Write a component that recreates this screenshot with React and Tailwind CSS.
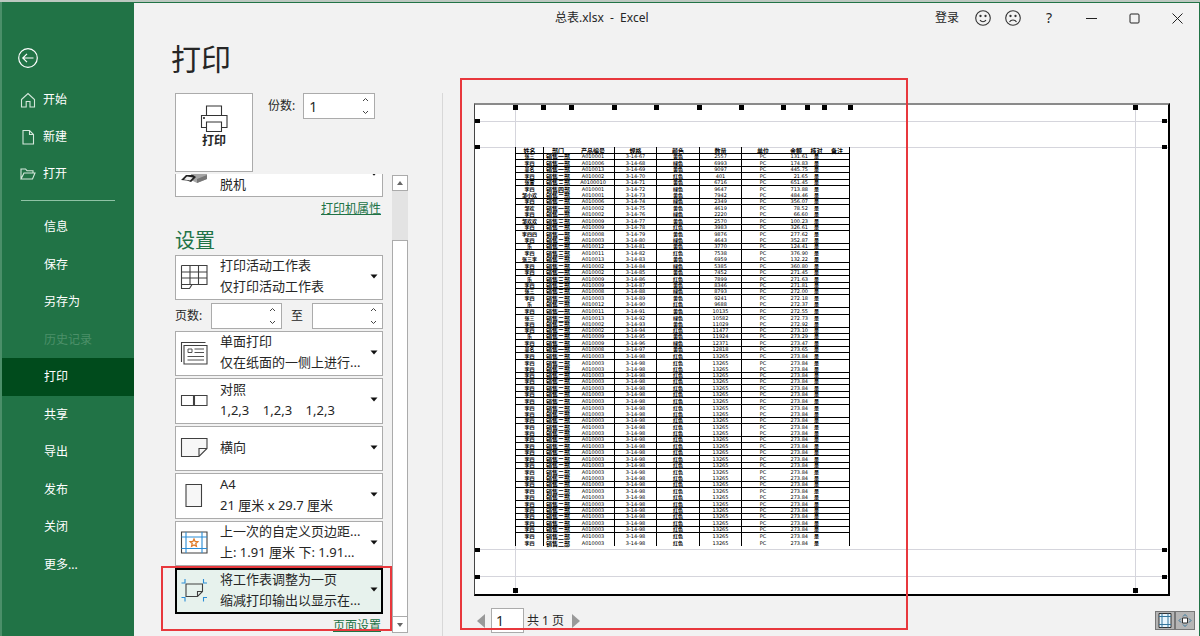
import { useState } from "react";

const topNav = [
  { label: "开始", icon: "home" },
  { label: "新建", icon: "file" },
  { label: "打开", icon: "folder" },
];

const lowerNav = ["信息", "保存", "另存为", "历史记录", "打印", "共享", "导出", "发布", "关闭", "更多..."];

// name, department, product, spec, color, quantity, amount
const records = [
  ["张三", "一", "A010001", 67, "黄色", 2557, "131.61"],
  ["李四", "一", "A010006", 68, "绿色", 6993, "174.83"],
  ["吴名", "一", "A010013", 69, "黄色", 9097, "445.75"],
  ["李四", "二", "A010002", 70, "红色", 401, "21.65"],
  ["张雷", "三", "A0100010", 71, "黄色", 6716, "651.45"],
  ["李四", "四", "A010001", 72, "绿色", 9647, "713.88"],
  ["邹小欢", "二", "A010001", 73, "黄色", 7942, "484.46"],
  ["李四", "二", "A010006", 74, "绿色", 2349, "356.07"],
  ["邹欢", "一", "A010002", 75, "黄色", 4619, "78.52"],
  ["李四", "一", "A010002", 76, "绿色", 2220, "66.60"],
  ["邹欢欢", "三", "A010009", 77, "黄色", 2570, "100.23"],
  ["李四", "二", "A010009", 78, "红色", 3983, "326.61"],
  ["李四四", "一", "A010008", 79, "黄色", 9876, "277.62"],
  ["李四", "二", "A010003", 80, "绿色", 4643, "352.87"],
  ["乐", "二", "A010012", 81, "黄色", 3770, "124.41"],
  ["李四", "三", "A010011", 82, "红色", 7538, "376.90"],
  ["张三李", "二", "A010013", 83, "黄色", 6959, "132.22"],
  ["李四", "二", "A010002", 84, "绿色", 5385, "360.80"],
  ["李四", "一", "A010002", 85, "黄色", 7452, "271.45"],
  ["乐", "三", "A010009", 86, "红色", 7899, "271.63"],
  ["李四", "三", "A010009", 87, "黄色", 8346, "271.81"],
  ["张三", "三", "A010008", 88, "绿色", 8793, "272.00"],
  ["李四", "二", "A010003", 89, "黄色", 9241, "272.18"],
  ["乐", "二", "A010012", 90, "红色", 9688, "272.37"],
  ["李四", "一", "A010011", 91, "黄色", 10135, "272.55"],
  ["张三", "二", "A010013", 92, "绿色", 10582, "272.73"],
  ["李四", "三", "A010002", 93, "黄色", 11029, "272.92"],
  ["李四", "二", "A010002", 94, "红色", 11477, "273.10"],
  ["乐", "二", "A010009", 95, "黄色", 11924, "273.29"],
  ["李四", "二", "A010009", 96, "绿色", 12371, "273.47"],
  ["吴名", "一", "A010008", 97, "黄色", 12818, "273.65"],
  ...Array.from({ length: 30 }, () => ["李四", "二", "A010003", 98, "红色", 13265, "273.84"]),
];

// rows whose bottom rule drops out at this zoom level
const noRule = [6, 9, 13, 16, 23, 26, 33, 40, 43, 50, 53, 60, 61];

const headers = ["姓名", "部门", "产品编号", "规格", "颜色", "数量", "单位", "金额", "核对", "备注"];

const topHandles = [
  "left-[38px]",
  "left-[66px]",
  "left-[94px]",
  "left-[137px]",
  "left-[179px]",
  "left-[222px]",
  "left-[264px]",
  "left-[306px]",
  "left-[330px]",
  "left-[347px]",
  "left-[373px]",
];

function NavIcon({ name }) {
  return (
    <svg width="16" height="16" viewBox="0 0 16 16" fill="none" stroke="#d5e8dc" strokeWidth="1.1">
      {name === "home" && <path d="M1.5 7.5 8 1.5l6.500 6v7.500h-4.500V9.500H6.200V15H1.500z" />}
      {name === "file" && <path d="M3 1.500h6.500L13.500 5.500V15H3zM9.500 1.500v4h4" />}
      {name === "folder" && <path d="M1 13V3h4.500l1.500 1.700h6V7M1 13 4 7h11l-2.500 6z" />}
    </svg>
  );
}

function SettingIcon({ name }) {
  return (
    <svg width="28" height="28" viewBox="0 0 28 28" fill="none" stroke="#404040" strokeWidth="1.1" className="shrink-0">
      {name === "sheets" && (
        <path d="M1.500 3.500h25.500v19H12M1.500 3.500v23h8l2.500-4H1.500M1.500 10h25.500M1.500 16h25.500M10 3.500v19M18.500 3.500v19" />
      )}
      {name === "single" && (
        <>
          <path d="M1.500 24V4.500h24M4 7.500h23V26H4z" />
          <path d="M8 11h4v3.500H8zM14.500 11H24M14.500 14.500H24M7.500 18.500H24M7.500 22H24" strokeWidth="0.9" />
        </>
      )}
      {name === "collate" && <path d="M1.500 9.500h12v10h-12zM14.500 9.500h12.500v10H14.500z" />}
      {name === "landscape" && <path d="M1.500 5.500h25.500v10l-8 8H1.500zM19 23.500v-8h8" fill="#f7f7f7" />}
      {name === "paper" && <path d="M6 3.500h15.500v22H6z" fill="#f7f7f7" />}
      {name === "margins" && (
        <>
          <path d="M1.500 4h25.500v21H1.500z" />
          <path d="M6 4v21M22 4v21M1.500 9h25.500M1.500 20.500h25.500" stroke="#2b8dd6" />
          <path
            d="m14 11 1.100 2.500 2.700.3-2 1.800.6 2.700-2.400-1.400-2.400 1.400.6-2.700-2-1.800 2.700-.3z"
            stroke="#e07b28"
            strokeWidth="1.300"
          />
        </>
      )}
      {name === "fit" && (
        <>
          <path d="M6 8h16.500v7.500l-5 5H6zM17.500 20.500v-5h5" />
          <path d="M1.500 7H5V3M23.500 3v4H27M1.500 21.500H5v4M23.500 25.500v-4H27" stroke="#2b8dd6" />
        </>
      )}
    </svg>
  );
}

function Caret() {
  return (
    <svg width="8" height="5" viewBox="0 0 8 5" className="shrink-0" fill="#111">
      <path d="M.5.500h7L4 4.500z" />
    </svg>
  );
}

function Setting({ icon, title, detail, active }) {
  return (
    <button
      type="button"
      aria-haspopup="listbox"
      className={`flex h-[45px] w-full items-center pb-[3px] text-left even:h-[46px] ${
        active ? "border-2 border-black bg-[#e7f2ed] px-[3px]" : "border border-[#ababab] bg-white px-1"
      }`}
    >
      <SettingIcon name={icon} />
      <span className="flex min-w-0 flex-1 flex-col pl-3 whitespace-pre">
        <span className="leading-[21px]">{title}</span>
        {detail && <span className="leading-[21px]">{detail}</span>}
      </span>
      <Caret />
    </button>
  );
}

function Spinner({ id, label, value, onChange }) {
  return (
    <>
      <label htmlFor={id} className="shrink-0 text-xs">
        {label}
      </label>
      <div className="flex h-[26px] w-[72px] items-center border border-[#ababab] bg-white">
        <input
          id={id}
          value={value}
          onChange={(e) => onChange(e.target.value)}
          className="h-full w-full min-w-0 flex-1 bg-transparent pl-[5px] text-sm outline-none"
        />
        <svg width="7" height="18" viewBox="0 0 7 18" fill="none" stroke="#444" className="mr-[5px] shrink-0">
          <path d="m1 4 2.500-2.500L6 4M1 14l2.500 2.500L6 14" />
        </svg>
      </div>
    </>
  );
}

function Face({ sad }) {
  return (
    <svg width="16" height="16" viewBox="0 0 16 16" fill="none" stroke="#333" strokeWidth="1.100">
      <circle cx="8" cy="8" r="7.300" />
      <circle cx="5.500" cy="6" r=".6" fill="#333" />
      <circle cx="10.500" cy="6" r=".6" fill="#333" />
      <path d={sad ? "M4.500 12c1.500-2.700 5.500-2.700 7 0" : "M5 10.200c1.500 2 4.500 2 6 0"} />
    </svg>
  );
}

function Sidebar() {
  return (
    <nav className="w-[134px] shrink-0 border-l-2 border-[#4b8f69] bg-[#217346] pt-[46px] text-xs text-white">
      <button type="button" aria-label="返回" className="ml-4 block">
        <svg width="20" height="20" viewBox="0 0 20 20" fill="none" stroke="white" strokeWidth="1.200">
          <circle cx="10" cy="10" r="9.300" />
          <path d="M15.500 10H5M9 5.800 4.800 10 9 14.200" />
        </svg>
      </button>
      <div className="mt-[13px]">
        {topNav.map((item) => (
          <a key={item.label} href="#" className="flex h-[37px] items-center gap-[7px] pl-[18px]">
            <NavIcon name={item.icon} />
            {item.label}
          </a>
        ))}
      </div>
      <div className="mt-2 mr-[19px] mb-[7px] ml-[19px] h-px bg-[#8fc3a5]" />
      <div>
        {lowerNav.map((label) => (
          <a
            key={label}
            href="#"
            className={`flex h-[37px] items-center pl-[42px] odd:h-[38px] ${
              label === "打印" ? "bg-[#004b1c]" : ""
            } ${label === "历史记录" ? "text-[#4c9069]" : ""}`}
          >
            {label}
          </a>
        ))}
      </div>
    </nav>
  );
}

function TitleBar() {
  return (
    <header className="relative flex h-[30px] shrink-0 items-center justify-end pr-[15px] text-xs">
      <div className="absolute left-[421px] whitespace-pre">总表.xlsx  -  Excel</div>
      <button type="button" className="mr-4">登录</button>
      <button type="button" aria-label="笑脸" className="mr-[14px]">
        <Face />
      </button>
      <button type="button" aria-label="哭脸" className="mr-[25px]">
        <Face sad />
      </button>
      <button type="button" className="mr-[34px] text-sm">?</button>
      <button type="button" aria-label="最小化" className="mr-8">
        <svg width="11" height="11" stroke="#222"><path d="M0 5.500h11" /></svg>
      </button>
      <button type="button" aria-label="最大化" className="mr-8">
        <svg width="11" height="11" fill="none" stroke="#222"><rect x="1" y="1" width="9" height="9" rx="1" /></svg>
      </button>
      <button type="button" aria-label="关闭" className="mr-[1px]">
        <svg width="11" height="11" stroke="#222"><path d="m.5.500 10 10m0-10-10 10" /></svg>
      </button>
    </header>
  );
}

function SettingsPanel() {
  const [copies, setCopies] = useState("1");
  const [from, setFrom] = useState("");
  const [to, setTo] = useState("");

  return (
    <section className="flex w-[275px] shrink-0 flex-col pl-[41px]">
      <div className="flex gap-[15px]">
        <button
          type="button"
          className="flex h-[79px] w-[78px] flex-col items-center border border-[#ababab] bg-white pt-[10px] text-xs font-bold"
        >
          <svg width="28" height="29" viewBox="0 0 28 28" fill="white" stroke="#333" strokeWidth="1.100">
            <path d="M6.500 11V1.500h15V11" />
            <path d="M1.500 11h25.500v12H1.500z" />
            <path d="M6.500 17.500h15v9.500h-15z" />
            <circle cx="4" cy="13.500" r=".5" fill="#333" />
          </svg>
          打印
        </button>
        <div className="flex h-[26px] items-center gap-2">
          <Spinner id="copies" label="份数:" value={copies} onChange={setCopies} />
        </div>
      </div>

      <div className="mt-[2px] flex min-h-0 flex-1 overflow-hidden">
        <div className="w-[208px] shrink-0 text-[13px]">
          {/* printer picker, scrolled mostly out of view */}
          <button
            type="button"
            aria-haspopup="listbox"
            className="flex h-[23px] w-full items-start gap-3 overflow-hidden border border-t-0 border-[#ababab] bg-white px-1 text-left"
          >
            <svg width="28" height="10" viewBox="0 0 28 10" className="shrink-0">
              <path d="M11 0h16v5l-10 4-6-3z" fill="#a5a5a5" />
              <path d="M17 5 27 1v4l-10 4z" fill="#777" />
              <path d="m1 6 5-5h7l3 2-5 5-4-1.500z" fill="#222" />
              <path d="m4 5.500 3-3 6 1-3 3z" fill="#eee" />
            </svg>
            <span className="flex-1 leading-[20px]">脱机</span>
            <svg width="8" height="3" viewBox="0 0 8 3"><path d="M2.500 0h3L4 1.800z" fill="#111" /></svg>
          </button>
          <div className="pt-[2px] pr-[2px] text-right text-xs leading-[20px]">
            <a href="#" className="text-[#217346] underline">打印机属性</a>
          </div>
          <h2 className="mt-[10px] text-xl leading-[24px] text-[#217346]">设置</h2>
          <div className="mt-[2px]">
            <Setting icon="sheets" title="打印活动工作表" detail="仅打印活动工作表" />
          </div>
          <div className="mt-[3px] mb-[2px] flex items-center gap-[9px]">
            <Spinner id="from" label="页数:" value={from} onChange={setFrom} />
            <Spinner id="to" label="至" value={to} onChange={setTo} />
          </div>
          <div className="flex flex-col gap-[2px]">
            <Setting icon="single" title="单面打印" detail="仅在纸面的一侧上进行..." />
            <Setting icon="collate" title="对照" detail="1,2,3    1,2,3    1,2,3" />
            <Setting icon="landscape" title="横向" />
            <Setting icon="paper" title="A4" detail="21 厘米 x 29.7 厘米" />
            <Setting icon="margins" title="上一次的自定义页边距..." detail="上: 1.91 厘米 下: 1.91..." />
            <Setting icon="fit" title="将工作表调整为一页" detail="缩减打印输出以显示在..." active />
          </div>
          <div className="pt-[2px] pr-[2px] text-right text-xs leading-[20px]">
            <a href="#" className="text-[#217346] underline">页面设置</a>
          </div>
        </div>
        <div className="mt-[1px] mb-[3px] ml-[9px] flex w-4 shrink-0 flex-col bg-[#e3e3e3]">
          <button type="button" aria-label="向上" className="flex h-4 items-center justify-center border border-[#ababab] bg-white">
            <svg width="6" height="4" fill="#666"><path d="M0 4 3 0l3 4z" /></svg>
          </button>
          <div className="mt-[49px] flex-1 border border-[#ababab] bg-white" />
          <button type="button" aria-label="向下" className="flex h-4 items-center justify-center border border-t-0 border-[#ababab] bg-white">
            <svg width="6" height="4" fill="#666"><path d="M0 0 3 4l3-4z" /></svg>
          </button>
        </div>
      </div>
    </section>
  );
}

function SheetTable() {
  return (
    <table className="w-[335px] table-fixed border-separate border-spacing-0 border-r border-l border-black text-center font-['DejaVu_Sans','Noto_Sans_CJK_SC',sans-serif] text-[5px] leading-[5px] text-black">
      <colgroup>
        <col className="w-[28px]" />
        <col className="w-[28px]" />
        <col className="w-[43px]" />
        <col className="w-[42px]" />
        <col className="w-[43px]" />
        <col className="w-[42px]" />
        <col className="w-[42px]" />
        <col className="w-[24px]" />
        <col className="w-[17px]" />
        <col />
      </colgroup>
      <thead>
        <tr className="h-[7px]">
          {headers.map((h, i) => (
            <th
              key={h}
              className={`border-b border-black p-0 text-[6px] leading-[5px] font-bold whitespace-nowrap ${
                [0, 2, 3, 4, 5].includes(i) ? "border-r" : ""
              }`}
            >
              {h}
            </th>
          ))}
        </tr>
      </thead>
      <tbody className="[&_td]:border-black [&_td]:p-0 [&_td]:whitespace-nowrap">
        {records.map(([name, dept, product, spec, color, qty, amount], i) => {
          const rule = noRule.includes(i + 1) ? "" : "border-b";
          return (
            <tr key={i} className={[1, 3, 5].includes(i % 7) ? "h-[7px]" : "h-[6px]"}>
              <td className={`border-r font-bold ${rule}`}>{name}</td>
              <td className={`text-[6px] leading-[5px] font-bold ${rule}`}>销售{dept}部</td>
              <td className={`border-r ${rule}`}>{product}</td>
              <td className={`border-r ${rule}`}>3-14-{spec}</td>
              <td className={`border-r font-bold ${rule}`}>{color}</td>
              <td className={`border-r ${rule}`}>{qty}</td>
              <td className={rule}>PC</td>
              <td className={`text-right ${rule}`}>{amount}</td>
              <td className={`font-bold ${rule}`}>是</td>
              <td className={rule}></td>
            </tr>
          );
        })}
      </tbody>
    </table>
  );
}

function Paper() {
  return (
    <div className="relative mr-[29px] ml-[13px] h-[493px] border-t-2 border-r-2 border-b-2 border-l border-t-[#8a8a8a] border-r-black border-b-black border-l-[#444] bg-white pt-[42px] pl-[40px]">
      {/* margin guides */}
      <div className="absolute inset-y-0 left-[40px] w-px bg-[#d5d5dc]" />
      <div className="absolute inset-y-0 right-[32px] w-px bg-[#d5d5dc]" />
      <div className="absolute inset-x-0 top-[16px] h-px bg-[#d5d5dc]" />
      <div className="absolute inset-x-0 top-[42px] h-px bg-[#d5d5dc]" />
      <div className="absolute inset-x-0 bottom-[44px] h-px bg-[#d5d5dc]" />
      <div className="absolute inset-x-0 bottom-[17px] h-px bg-[#d5d5dc]" />

      {/* drag handles */}
      {topHandles.map((pos) => (
        <div key={pos} className={`absolute top-0 h-[5px] w-[5px] bg-black ${pos}`} />
      ))}
      <div className="absolute top-0 right-[30px] h-[5px] w-[5px] bg-black" />
      <div className="absolute bottom-[1px] left-[38px] h-[5px] w-[5px] bg-black" />
      <div className="absolute right-[30px] bottom-[1px] h-[5px] w-[5px] bg-black" />
      <div className="absolute top-[14px] left-0 h-[4px] w-[5px] bg-black" />
      <div className="absolute top-[40px] left-0 h-[4px] w-[5px] bg-black" />
      <div className="absolute bottom-[42px] left-0 h-[4px] w-[5px] bg-black" />
      <div className="absolute bottom-[15px] left-0 h-[4px] w-[5px] bg-black" />
      <div className="absolute top-[14px] right-[1px] h-[4px] w-[5px] bg-black" />
      <div className="absolute top-[40px] right-[1px] h-[4px] w-[5px] bg-black" />
      <div className="absolute right-[1px] bottom-[42px] h-[4px] w-[5px] bg-black" />
      <div className="absolute right-[1px] bottom-[15px] h-[4px] w-[5px] bg-black" />

      <div className="relative">
        <SheetTable />
      </div>
    </div>
  );
}

function Preview() {
  const [page, setPage] = useState("1");

  return (
    <section className="relative flex min-w-0 flex-1 flex-col">
      <div className="pt-[10px]">
        <Paper />
      </div>
      <div className="mt-3 mr-1 ml-4 flex h-[25px] items-center">
        <button type="button" aria-label="上一页">
          <svg width="8" height="14" fill="#999"><path d="M8 0v14L0 7z" /></svg>
        </button>
        <input
          aria-label="页码"
          value={page}
          onChange={(e) => setPage(e.target.value)}
          className="ml-[6px] h-[25px] w-[33px] border border-[#ababab] bg-white pl-1 text-sm outline-none"
        />
        <span className="ml-[3px] text-xs">共 1 页</span>
        <button type="button" aria-label="下一页" className="ml-2">
          <svg width="8" height="14" fill="#999"><path d="M0 0v14l8-7z" /></svg>
        </button>
        <div className="ml-auto flex border border-[#777] bg-[#777]">
          <button type="button" aria-label="显示边距" className="bg-[#b5b5b5] px-[2px]">
            <svg width="14" height="17" viewBox="0 0 14 17" fill="none" stroke="#33759c">
              <path d="M1 1.500h12v14H1z" fill="#e8f5fc" stroke="#333" />
              <path d="M4 1.500v14M10 1.500v14M1 4.500h12M1 12.500h12" />
            </svg>
          </button>
          <button type="button" aria-label="缩放到页面" className="ml-[2px] bg-[#b5b5b5] px-[2px]">
            <svg width="14" height="17" viewBox="0 0 14 17" fill="none" stroke="#33759c">
              <path d="M5 4.500 7 2.500l2 2M5 12.500l2 2 2-2M3 6.500l-2 2 2 2M11 6.500l2 2-2 2" />
              <path d="M4.500 6h5v5h-5z" fill="white" stroke="#333" />
            </svg>
          </button>
        </div>
      </div>
      {/* highlight around the previewed page */}
      <div className="pointer-events-none absolute top-[-15px] bottom-[6px] left-[-1px] w-[448px] border-2 border-[#e8383d]" />
    </section>
  );
}

export default function App() {
  return (
    <div className="flex h-screen min-h-[636px] flex-col border-t-2 border-[#bcc8c0] bg-[#f2f2f2] font-['Noto_Sans','Noto_Sans_CJK_SC',sans-serif] text-[#262626]">
      <div className="flex min-h-0 flex-1">
        <Sidebar />
        <main className="flex min-w-0 flex-1 flex-col border-t border-r border-[#217346]">
          <TitleBar />
          <h1 className="pl-[37px] text-3xl leading-[52px]">打印</h1>
          <div className="mt-2 flex min-h-0 flex-1">
            <div className="relative flex">
              <SettingsPanel />
              {/* highlight around the scaling option */}
              <div className="pointer-events-none absolute bottom-[5px] left-[27px] h-[65px] w-[231px] border-2 border-[#e8383d]" />
            </div>
            <div className="ml-[33px] w-px bg-[#d8d8d8]" />
            <div className="w-[18px] shrink-0" />
            <Preview />
          </div>
        </main>
      </div>
    </div>
  );
}
